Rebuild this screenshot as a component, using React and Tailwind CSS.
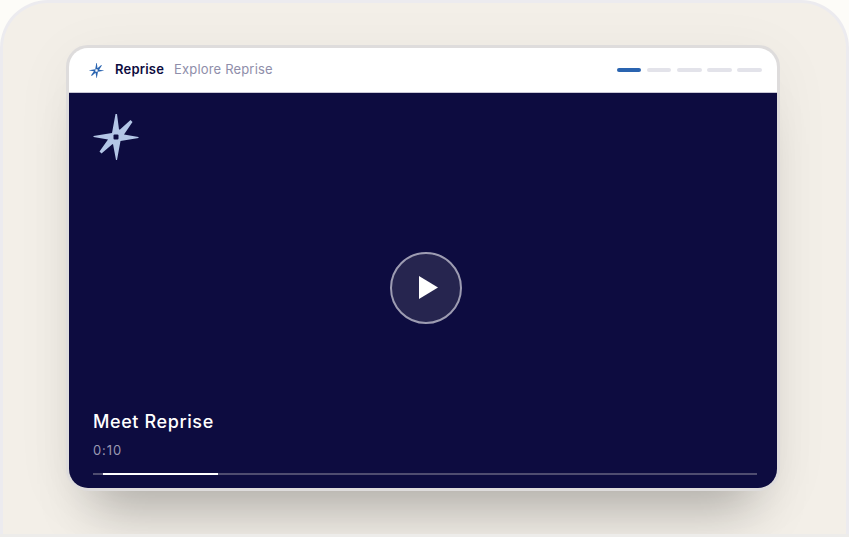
import React from "react";

// same mark is used in the header and on the video
const Star = ({ className, hole, size = 5 }) => (
  <svg viewBox="0 0 46 46" className={className} fill="currentColor">
    <path d="M22.5 0 L24 0 L26 15.5 L27 15.5 L37.5 6 L39.5 8 L31 20.5 L45.5 23 L45.5 24 L27.5 27 L24 46 L23 46 L20 30 L19 30.5 L8.5 39.5 L6.5 37.5 L15 25.5 L0.5 23 L0.5 22 L19 19 Z" />
    <rect x={23 - size / 2} y={23 - size / 2} width={size} height={size} rx="1" fill={hole} />
  </svg>
);

const STEPS = [true, false, false, false, false];

export default function App() {
  return (
    <div className="w-[849px] h-[537px] overflow-hidden bg-[#fdfcf8] font-['Inter',sans-serif]">
      <div className="w-[849px] h-[534px] pt-[42px] pl-[63px] rounded-t-[48px] border-[3px] border-b-0 border-[#ecebef] bg-[#f3efe8]">
        <div className="w-[714px] h-[446px] flex flex-col rounded-[22px] border-[3px] border-[#dedcdc] bg-[#dedcdc] overflow-hidden shadow-[0_46px_50px_-28px_rgba(0,0,0,0.26),0_10px_60px_rgba(0,0,0,0.05)]">
          <div className="h-[45px] shrink-0 flex items-center bg-white border-b border-[#c9c8d6] pl-[20px] pr-[15px]">
            <Star className="w-[15px] h-[15px] text-[#2a64b0]" hole="#ffffff" size={7} />
            <span className="ml-[11px] text-[13px] font-semibold tracking-[0.2px] text-[#0d0c40]">Reprise</span>
            <span className="ml-[10px] text-[13px] tracking-[0.17px] text-[#8f8eaa]">Explore Reprise</span>
            <div className="ml-auto flex gap-[5.6px]">
              {STEPS.map((on, i) => (
                <div key={i} className={on ? "w-[24.6px] h-[4px] rounded-full bg-[#2a64b0]" : "w-[24.6px] h-[4px] rounded-full bg-[#e3e3ea]"} />
              ))}
            </div>
          </div>
          <div className="flex-1 flex flex-col bg-[#0d0c40] pl-[24px] pr-[20px] pt-[21px]">
            <Star className="w-[46px] h-[46px] text-[#b3c6e6]" hole="#0d0c40" />
            <div className="mt-[92px] ml-[297px] w-[72px] h-[72px] flex items-center justify-center rounded-full border-2 border-[#9d9cb2] bg-[#26254f]">
              <svg viewBox="0 0 19 23" className="w-[19px] h-[23px] ml-[4px] mb-[1px]" fill="#ffffff">
                <path d="M0 0 L19 11.5 L0 23 Z" />
              </svg>
            </div>
            <div className="mt-[86px] text-[18px] leading-[24px] font-medium tracking-[0.6px] text-white">Meet Reprise</div>
            <div className="mt-[7px] text-[13px] leading-[18px] tracking-[0.9px] text-[#9a99b2]">0:10</div>
            <div className="mt-[14px] h-[2px] flex bg-[#4f4d70]">
              <div className="ml-[10px] w-[115px] bg-white" />
            </div>
          </div>
        </div>
      </div>
      <div className="h-[3px] bg-[#edecea]" />
    </div>
  );
}
